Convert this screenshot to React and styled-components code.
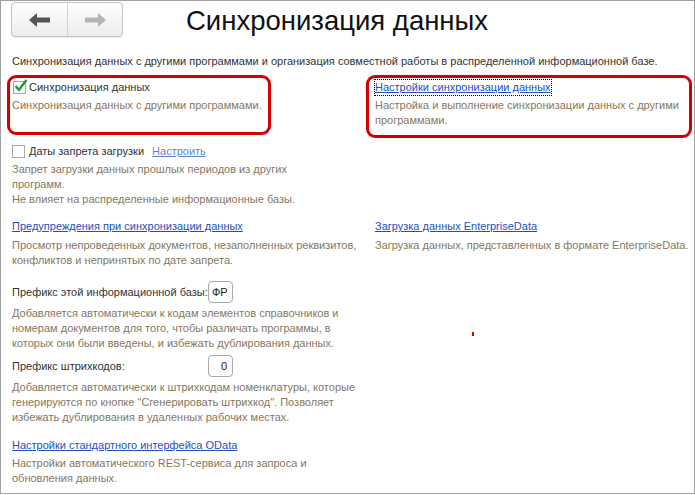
import React from "react";
import styled, { createGlobalStyle } from "styled-components";

const Global = createGlobalStyle`
  body {
    margin: 0;
    background: #fff;
    font-family: "Liberation Sans", Arial, sans-serif;
  }
`;

function App() {
  return (
    <Frame>
      <Global />
      <Header>
        <NavGroup>
          <NavButton>
            <Arrow color="#555" />
          </NavButton>
          <NavButton right>
            <Arrow color="#b3b3b3" flip />
          </NavButton>
        </NavGroup>
        <Title>Синхронизация данных</Title>
      </Header>

      <Intro>
        Синхронизация данных с другими программами и организация совместной работы в распределенной информационной базе.
      </Intro>

      <Row top={11}>
        <Cell>
          <Highlight left={-5} top={-5} width={264} height={60} />
          <CheckRow>
            <CheckBox checked>
              <svg width="14" height="13" viewBox="0 0 14 13">
                <path d="M1.5 7 L5 10.8 L12.5 1" fill="none" stroke="#1f9a3a" strokeWidth="2.4" />
              </svg>
            </CheckBox>
            <Label>Синхронизация данных</Label>
          </CheckRow>
          <Desc top={3}>Синхронизация данных с другими программами.</Desc>
        </Cell>
        <Cell>
          <Highlight left={-9} top={-5} width={326} height={63} />
          <Link focused>Настройки синхронизации данных</Link>
          <Desc top={3}>
            Настройка и выполнение синхронизации данных с другими
            <br />
            программами.
          </Desc>
        </Cell>
      </Row>

      <Row top={16}>
        <Cell>
          <CheckRow>
            <CheckBox />
            <Label>Даты запрета загрузки</Label>
            <Link light>Настроить</Link>
          </CheckRow>
          <Desc top={3}>
            Запрет загрузки данных прошлых периодов из других
            <br />
            программ.
            <br />
            Не влияет на распределенные информационные базы.
          </Desc>
        </Cell>
      </Row>

      <Row top={12}>
        <Cell>
          <Link>Предупреждения при синхронизации данных</Link>
          <Desc top={4}>
            Просмотр непроведенных документов, незаполненных реквизитов,
            <br />
            конфликтов и непринятых по дате запрета.
          </Desc>
        </Cell>
        <Cell>
          <Link>Загрузка данных EnterpriseData</Link>
          <Desc top={4}>Загрузка данных, представленных в формате EnterpriseData.</Desc>
        </Cell>
      </Row>

      <Row top={13}>
        <Cell>
          <FieldRow>
            <FieldLabel>Префикс этой информационной базы:</FieldLabel>
            <Input>ФР</Input>
          </FieldRow>
          <Desc top={3}>
            Добавляется автоматически к кодам элементов справочников и
            <br />
            номерам документов для того, чтобы различать программы, в
            <br />
            которых они были введены, и избежать дублирования данных.
          </Desc>
        </Cell>
        <Cell>
          <Mark />
        </Cell>
      </Row>

      <Row top={4}>
        <Cell>
          <FieldRow>
            <FieldLabel>Префикс штрихкодов:</FieldLabel>
            <Input alignRight>0</Input>
          </FieldRow>
          <Desc top={3}>
            Добавляется автоматически к штрихкодам номенклатуры, которые
            <br />
            генерируются по кнопке "Сгенерировать штрихкод". Позволяет
            <br />
            избежать дублирования в удаленных рабочих местах.
          </Desc>
        </Cell>
      </Row>

      <Row top={13}>
        <Cell>
          <Link>Настройки стандартного интерфейса OData</Link>
          <Desc top={3}>
            Настройки автоматического REST-сервиса для запроса и
            <br />
            обновления данных.
          </Desc>
        </Cell>
      </Row>
    </Frame>
  );
}

function Arrow({ color, flip }) {
  return (
    <svg
      width="21"
      height="14"
      viewBox="0 0 21 14"
      style={flip ? { transform: "scaleX(-1)" } : undefined}
    >
      <path d="M0 7 L8 0 L8 4.5 L21 4.5 L21 9.5 L8 9.5 L8 14 Z" fill={color} />
    </svg>
  );
}

export default App;

const Frame = styled.div`
  position: relative;
  width: 695px;
  height: 494px;
  box-sizing: border-box;
  border: 1px solid #a0a0a0;
  padding: 0 11px;
  overflow: hidden;
`;

const Header = styled.div`
  display: flex;
  align-items: flex-start;
  height: 40px;
`;

const NavGroup = styled.div`
  display: flex;
  margin: 1px 0 0 -1px;
  height: 35px;
  box-sizing: border-box;
  border: 1px solid #c4c4c4;
  border-radius: 4px;
  background: linear-gradient(#ffffff, #ececec);
  box-shadow: 0 1px 1px rgba(0, 0, 0, 0.08);
`;

const NavButton = styled.div`
  width: ${(p) => (p.right ? "54px" : "55px")};
  display: flex;
  align-items: center;
  justify-content: center;
  border-left: ${(p) => (p.right ? "1px solid #d2d2d2" : "none")};
`;

const Title = styled.h1`
  margin: 0 0 0 63px;
  font-size: 27.5px;
  line-height: 40px;
  font-weight: normal;
  color: #111;
`;

const Intro = styled.div`
  margin-top: 13px;
  font-size: 11px;
  line-height: 15px;
  color: #333;
`;

const Row = styled.div`
  display: grid;
  grid-template-columns: 355px 1fr;
  column-gap: 8px;
  margin-top: ${(p) => p.top}px;
`;

const Cell = styled.div`
  position: relative;
  font-size: 11px;
  line-height: 15px;
`;

const Highlight = styled.div`
  position: absolute;
  left: ${(p) => p.left}px;
  top: ${(p) => p.top}px;
  width: ${(p) => p.width}px;
  height: ${(p) => p.height}px;
  box-sizing: border-box;
  border: 3px solid #d40000;
  border-radius: 9px;
  pointer-events: none;
`;

const CheckRow = styled.div`
  display: flex;
  align-items: center;
  height: 15px;
`;

const CheckBox = styled.span`
  width: 13px;
  height: 13px;
  box-sizing: border-box;
  border: 1px solid #a8a8a8;
  background: #fff;
  margin-left: ${(p) => (p.checked ? "1px" : "0")};
  margin-right: ${(p) => (p.checked ? "3px" : "4px")};
  position: relative;
  svg {
    position: absolute;
    left: 0;
    top: -3px;
  }
`;

const Label = styled.span`
  color: #333;
  margin-right: 8px;
`;

const Link = styled.span`
  display: inline-block;
  color: ${(p) => (p.light ? "#5f85d2" : "#1d4fbf")};
  text-decoration: underline;
  text-underline-offset: 1px;
  outline: ${(p) => (p.focused ? "1px dotted #000" : "none")};
  outline-offset: 0;
  line-height: 15px;
`;

const Desc = styled.div`
  margin-top: ${(p) => p.top}px;
  color: #85775f;
  white-space: nowrap;
`;

const FieldRow = styled.div`
  display: flex;
  align-items: center;
  height: 22px;
`;

const FieldLabel = styled.span`
  width: 196px;
  color: #333;
`;

const Input = styled.div`
  width: 25px;
  height: 22px;
  box-sizing: border-box;
  border: 1px solid #a9a9a9;
  border-radius: 4px;
  padding: 0 5px 0 3px;
  display: flex;
  align-items: center;
  justify-content: ${(p) => (p.alignRight ? "flex-end" : "flex-start")};
  color: #222;
  background: #fff;
`;

const Mark = styled.div`
  width: 2px;
  height: 4px;
  background: #d40000;
  margin: 51px 0 0 97px;
`;
